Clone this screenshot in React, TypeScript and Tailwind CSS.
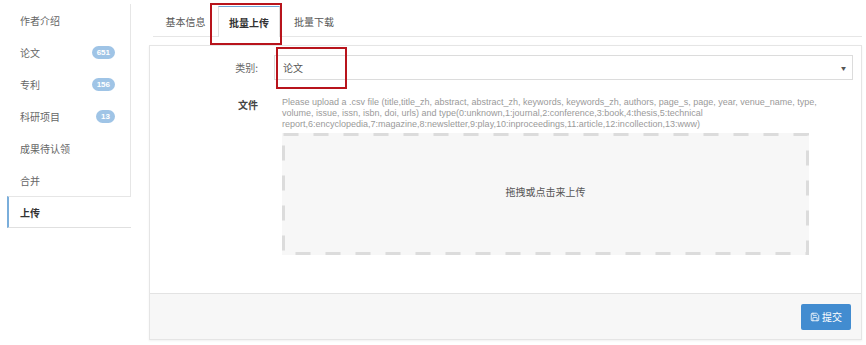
import { Save } from "lucide-react";

type NavItem = {
  label: string;
  count?: number;
};

const navItems: NavItem[] = [
  { label: "作者介绍" },
  { label: "论文", count: 651 },
  { label: "专利", count: 156 },
  { label: "科研项目", count: 13 },
  { label: "成果待认领" },
  { label: "合并" },
];

const helpLines = [
  "Please upload a .csv file (title,title_zh, abstract, abstract_zh, keywords, keywords_zh, authors, page_s, page, year, venue_name, type,",
  "volume, issue, issn, isbn, doi, urls) and type(0:unknown,1:journal,2:conference,3:book,4:thesis,5:technical",
  "report,6:encyclopedia,7:magazine,8:newsletter,9:play,10:inproceedings,11:article,12:incollection,13:www)",
];

const cjk = "font-['Noto_Sans_CJK_SC',sans-serif]";

// dashed upload area
const DropZone = () => (
  <div className="relative w-[527px] h-[122px] bg-[#f7f7f7] flex items-center justify-center pb-[6px]">
    <svg className="absolute inset-0" width={527} height={122}>
      <rect
        x={1.5}
        y={1.5}
        width={524}
        height={119}
        fill="none"
        stroke="#dcdcdc"
        strokeWidth={3}
        strokeDasharray="15 15"
      />
    </svg>
    <span className="text-[10px] text-[#555]">拖拽或点击来上传</span>
  </div>
);

const Sidebar = () => (
  <div className="w-[131px] pl-[7px] pt-[4px] shrink-0">
    {navItems.map((item) => (
      <div
        key={item.label}
        className="h-[32px] flex items-center justify-between pl-[13px] pr-[15px] border-r border-[#e6e6e6] text-[10px] text-[#666]"
      >
        <span>{item.label}</span>
        {item.count !== undefined && (
          <span className="h-[13px] px-[5px] rounded-full bg-[#9fc4e6] text-white text-[8px] font-bold leading-[13px] text-center font-['Liberation_Sans',sans-serif]">
            {item.count}
          </span>
        )}
      </div>
    ))}
    <div className="h-[32px] flex items-center pl-[11px] border-l-2 border-[#7aaedb] border-t border-b border-b-[#e0e0e0] border-t-[#e6e6e6] text-[10px] font-bold text-[#333]">
      上传
    </div>
  </div>
);

const Tabs = () => (
  <div className="ml-[4px] h-[37px] flex items-end border-b border-[#e6e6e6] text-[10px]">
    <div className="h-[30px] w-[65px] flex items-center justify-center text-[#555]">基本信息</div>
    <div className="relative h-[31px] w-[62px] flex items-center justify-center bg-white border-t border-t-[#6ea6d8] border-x border-x-[#e0e0e0] -mb-px text-[#333] font-bold">
      批量上传
      <div className="absolute left-[-9px] top-[-4px] w-[72px] h-[42px] border-2 border-[#b8141c]" />
    </div>
    <div className="h-[30px] w-[68px] flex items-center justify-center text-[#555]">批量下载</div>
  </div>
);

export default function App() {
  return (
    <div className={`w-[866px] h-[345px] bg-white flex ${cjk}`}>
      <Sidebar />
      <div className="flex-1 pl-[18px] pr-[4px]">
        <Tabs />
        <div className="mt-[8px] h-[295px] border border-[#e5e5e5] shadow-[0_1px_2px_rgba(0,0,0,0.06)] flex flex-col">
          <div className="flex-1 pt-[9px] pr-[8px]">
            <div className="flex items-center">
              <div className="w-[109px] pr-[1px] text-right text-[10px] text-[#666]">类别:</div>
              <div className="relative ml-[15px] flex-1 h-[25px] border border-[#dcdcdc] flex items-center justify-between pl-[8px] pr-[6px]">
                <span className="text-[10px] text-[#555]">论文</span>
                <span className="text-[5px] text-[#555]">▼</span>
                <div className="absolute left-[1px] top-[-9px] w-[71px] h-[42px] border-2 border-[#b8141c]" />
              </div>
            </div>
            <div className="flex mt-[17px]">
              <div className="w-[109px] pr-[1px] text-right text-[10px] font-bold text-[#444]">文件</div>
              <div className="ml-[23px]">
                <div className="text-[9px] leading-[11px] text-[#9a9a9a] font-['Liberation_Sans',sans-serif] whitespace-nowrap">
                  {helpLines.map((line) => (
                    <div key={line}>{line}</div>
                  ))}
                </div>
                <div className="mt-[3px]">
                  <DropZone />
                </div>
              </div>
            </div>
          </div>
          <div className="h-[46px] border-t border-[#e3e3e3] bg-[#f7f7f7] flex items-center justify-end pr-[10px]">
            <button className="h-[26px] w-[50px] rounded-[2px] bg-[#428cd0] text-white text-[10px] flex items-center justify-center gap-[2px]">
              <Save size={10} strokeWidth={2} />
              提交
            </button>
          </div>
        </div>
      </div>
    </div>
  );
}
